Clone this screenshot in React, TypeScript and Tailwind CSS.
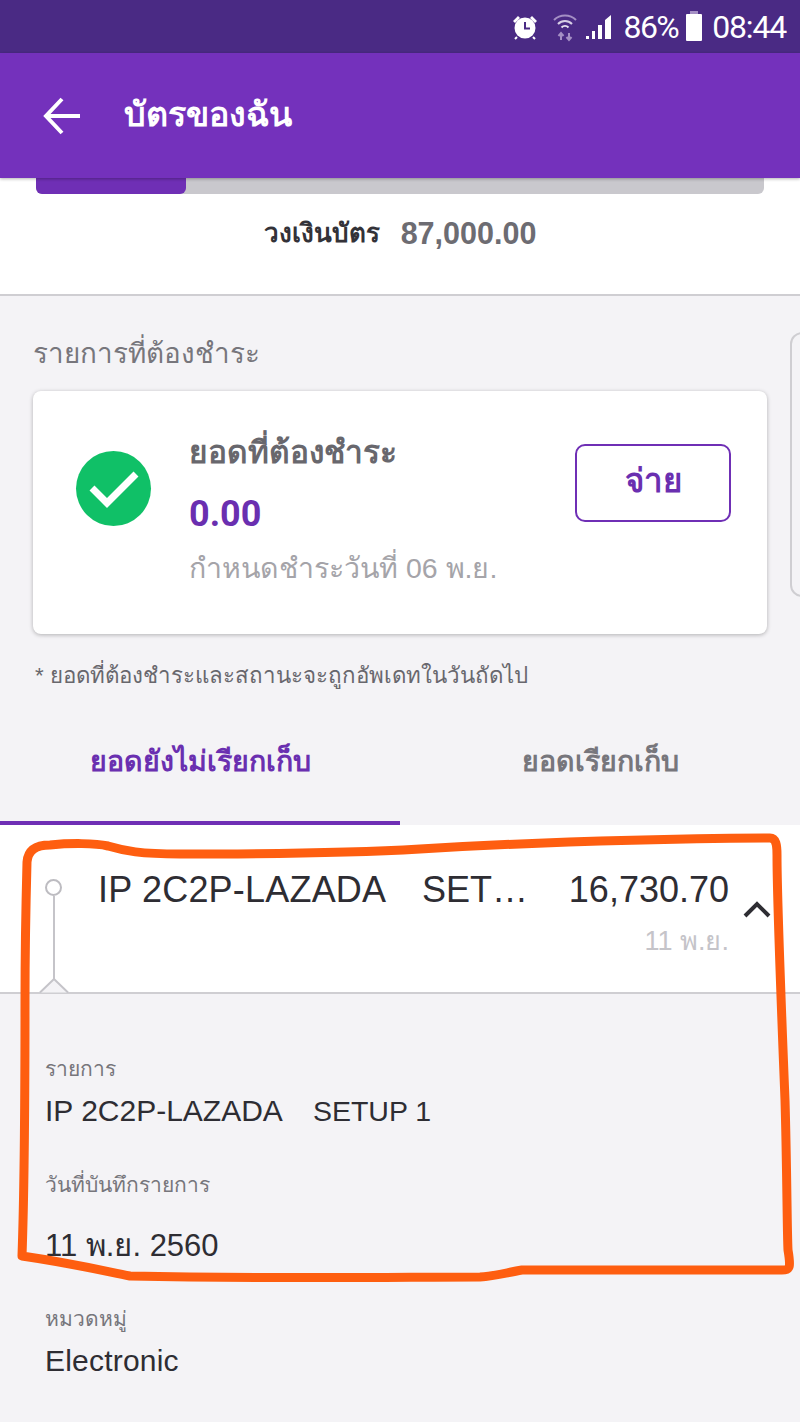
import type { ReactNode } from "react";

const thai = "font-['Liberation_Sans','Noto_Sans',sans-serif]";

const StatusBar = () => (
  <div className="h-[53px] bg-[#4a2a84] flex items-center justify-end pr-[14px] text-white">
    <svg width="30" height="30" viewBox="0 0 30 30" className="mr-[12px]">
      <circle cx="15" cy="16" r="10.5" fill="#fff" />
      <path d="M15 10v6.500h5" fill="none" stroke="#4a2a84" strokeWidth="2" />
      <path d="M3 9l5-5 2 2-5 5zM27 9l-5-5-2 2 5 5z" fill="#fff" />
      <path d="M7 25l-2 2M23 25l2 2" stroke="#fff" strokeWidth="2" />
    </svg>
    <svg width="26" height="30" viewBox="0 0 26 30" className="mr-[7px]" fill="none" stroke="#a48fc4" strokeWidth="2">
      <path d="M2 8c6-6 16-6 22 0" />
      <path d="M6 12c4-4 10-4 14 0" stroke="#d8cfe6" />
      <path d="M9.500 15.500c2-2 5-2 7 0" stroke="#e8e2f0" />
      <path d="M9 28v-6M6.500 24l2.500-3 2.500 3M17 21v6M14.500 25l2.500 3 2.500-3" />
    </svg>
    <svg width="28" height="28" viewBox="0 0 28 28" className="mr-[10px]" fill="#fff">
      <path d="M1 26h3v-3H1zM7 26h3v-8H7zM13 26h4V12h-4zM20 26h6V2l-6 5z" />
    </svg>
    <span className="text-[32px] leading-[40px] font-['Roboto',sans-serif] tracking-[-1.5px] mr-[8px]">86%</span>
    <div className="relative w-[16px] h-[27px] mr-[10px] mt-[1px] bg-white rounded-[1px]">
      <div className="absolute -top-[3px] left-[4px] w-[8px] h-[3px] bg-[#a48fc4]" />
    </div>
    <span className="text-[32px] leading-[40px] font-['Roboto',sans-serif] tracking-[-1.2px]">08:44</span>
  </div>
);

const Header = () => (
  <div className="relative z-10 h-[125px] bg-[#7431bc] flex items-center shadow-[0_1px_3px_rgba(0,0,0,0.3)] text-white">
    <svg width="40" height="40" viewBox="0 0 40 40" fill="none" stroke="#fff" strokeWidth="4" className="ml-[42px]">
      <path d="M38 20H5M20 3L4 20l16 17" />
    </svg>
    <span className={`ml-[42px] pb-[2px] text-[34px] font-semibold ${thai}`}>บัตรของฉัน</span>
  </div>
);

const CreditLimit = () => (
  <div className="h-[118px] bg-white border-b-2 border-[#cfced2]">
    <div className="mx-[36px] h-[16px] bg-[#c9c8cd] rounded-b-[6px]">
      <div className="w-[150px] h-full bg-[#6f2fb5] rounded-b-[6px]" />
    </div>
    <div className="mt-[17px] flex justify-center items-center">
      <span className={`text-[26px] font-semibold text-[#333238] ${thai}`}>วงเงินบัตร</span>
      <span className={`ml-[21px] text-[30.500px] font-bold text-[#6d6c72] ${thai}`}>87,000.00</span>
    </div>
  </div>
);

const DueCard = () => (
  <div className="relative h-[243px] mx-[33px] bg-white rounded-[8px] shadow-[0_1px_4px_rgba(0,0,0,0.28)] flex">
    <div className="ml-[43px] mt-[60px] w-[75px] h-[75px] rounded-full bg-[#10c067] flex items-center justify-center">
      <svg width="50" height="40" viewBox="0 0 50 40" fill="none" stroke="#fff" strokeWidth="7">
        <path d="M3 19l15 15L47 5" />
      </svg>
    </div>
    <div className="ml-[38px] flex flex-col">
      <span className={`mt-[38px] leading-[46px] text-[31.600px] font-semibold text-[#68676d] ${thai}`}>ยอดที่ต้องชำระ</span>
      <span className="mt-[20px] leading-[38px] text-[36px] font-bold text-[#6a2fb0] font-['Roboto',sans-serif]">0.00</span>
      <span className={`mt-[15px] leading-[40px] text-[28.500px] text-[#a5a4a9] ${thai}`}>กำหนดชำระวันที่ 06 พ.ย.</span>
    </div>
    <button className={`absolute top-[53px] right-[36px] w-[156px] h-[78px] rounded-[10px] border-2 border-[#6f2fb5] bg-white pb-[4px] text-[33px] font-bold text-[#6a2fb0] ${thai}`}>จ่าย</button>
  </div>
);

const Field = ({ label, children, className, valueClass }: { label: string; children: ReactNode; className: string; valueClass: string }) => (
  <div className={className}>
    <div className={`text-[21px] leading-[30px] text-[#77767c] ${thai}`}>{label}</div>
    <div className={`text-[30px] leading-[40px] text-[#2e2d33] whitespace-nowrap ${thai} ${valueClass}`}>{children}</div>
  </div>
);

// เส้นปากกาสีส้มที่วาดทับบนภาพ
const Scribble = () => (
  <svg width="800" height="1422" viewBox="0 0 800 1422" fill="none" className="absolute top-0 left-0 pointer-events-none">
    <path
      d="M27 862C28 850 36 845 50 845C70 843 95 843 108 846C125 851 140 854 180 854C260 854 350 853 420 849C520 843 640 839 770 838C776 838 777 845 777 855C777 900 781 1000 785 1100C787 1170 787 1230 788 1250C791 1268 790 1270 782 1270C700 1270 600 1270 522 1270C505 1273 495 1276 480 1277C400 1277 280 1279 130 1276C100 1270 70 1263 22 1256C24 1200 25 1100 25 1000C25 950 26 900 27 862"
      stroke="#fe5e10"
      strokeWidth="9"
      strokeLinejoin="round"
      strokeLinecap="round"
    />
  </svg>
);

export default function App() {
  return (
    <div className="relative w-[800px] h-[1422px] overflow-hidden bg-[#f4f3f6] font-['Liberation_Sans',sans-serif]">
      <StatusBar />
      <Header />
      <CreditLimit />

      <div className="relative">
        <div className="absolute top-[36px] left-[790px] w-[40px] h-[265px] rounded-[12px] border-2 border-[#cfced2] bg-[#f4f3f6]" />
        <div className={`pl-[33px] pt-[38px] h-[95px] text-[27.800px] leading-[40px] text-[#77767c] ${thai}`}>รายการที่ต้องชำระ</div>
        <DueCard />
        <div className={`pl-[35px] pt-[24px] h-[65px] text-[22.300px] leading-[36px] text-[#68676d] ${thai}`}>* ยอดที่ต้องชำระและสถานะจะถูกอัพเดทในวันถัดไป</div>
      </div>

      <div className="flex h-[126px]">
        <div className={`w-1/2 border-b-[4px] border-[#6f2fb5] flex items-center justify-center pt-[2px] text-[28.500px] font-bold text-[#6a2fb0] ${thai}`}>ยอดยังไม่เรียกเก็บ</div>
        <div className={`w-1/2 flex items-center justify-center pb-[2px] text-[28.500px] font-bold text-[#77767c] ${thai}`}>ยอดเรียกเก็บ</div>
      </div>

      <div className="relative h-[169px] bg-white border-b-2 border-[#cfced2]">
        <div className="absolute left-[45px] top-[54px] w-[17px] h-[17px] rounded-full border-2 border-[#bdbcc1] bg-white" />
        <div className="absolute left-[53px] top-[71px] w-[2px] h-[86px] bg-[#c5c4c9]" />
        <svg width="30" height="15" viewBox="0 0 30 15" fill="none" className="absolute left-[39px] top-[153px]">
          <path d="M1 14.500L15 1l14 13.500" fill="#f4f3f6" stroke="#c5c4c9" strokeWidth="2" />
        </svg>
        <div className="absolute left-[98px] top-[43px] text-[36px] leading-[44px] tracking-[0.2px] text-[#2e2d33] whitespace-nowrap">IP 2C2P-LAZADA</div>
        <div className="absolute left-[422px] top-[43px] text-[36px] leading-[44px] text-[#2e2d33] whitespace-nowrap">SET…</div>
        <div className="absolute right-[71px] top-[43px] text-[36px] leading-[44px] text-[#2e2d33]">16,730.70</div>
        <div className={`absolute right-[71px] top-[98px] text-[27px] leading-[36px] text-[#c5c4c9] ${thai}`}>11 พ.ย.</div>
        <svg width="28" height="18" viewBox="0 0 28 18" fill="none" stroke="#2e2d33" strokeWidth="4" className="absolute left-[743px] top-[75px]">
          <path d="M2 16L14 4l12 12" />
        </svg>
      </div>

      <div className="px-[45px]">
        <Field label="รายการ" className="mt-[60px]" valueClass="mt-[7px]">
          IP 2C2P-LAZADA<span className="ml-[30px] text-[28.500px]">SETUP 1</span>
        </Field>
        <Field label="วันที่บันทึกรายการ" className="mt-[39px]" valueClass="mt-[26px] text-[31px]">
          11 พ.ย. 2560
        </Field>
        <Field label="หมวดหมู่" className="mt-[38px]" valueClass="mt-[7px] tracking-[0.2px]">
          Electronic
        </Field>
      </div>

      <Scribble />
    </div>
  );
}
